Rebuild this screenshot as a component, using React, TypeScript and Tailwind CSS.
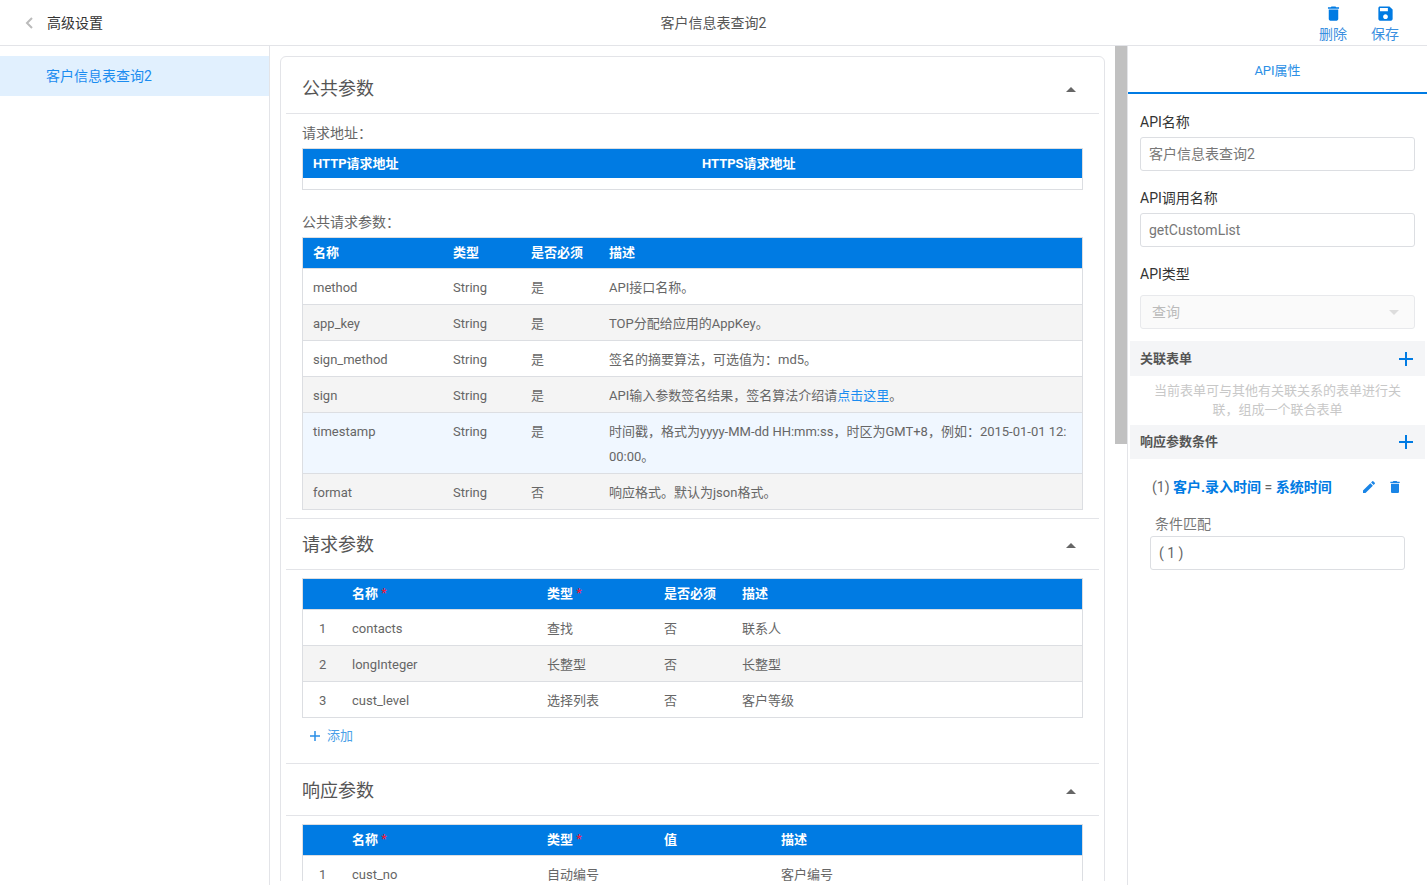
import React from "react";

const FONT = "font-['Roboto','Noto_Sans_CJK_SC',sans-serif]";
const CM = "\uFF0C";
const CL = "\uFF1A";

function Trash({ className }: { className?: string }) {
  return (
    <svg viewBox="0 0 24 24" className={className} fill="currentColor">
      <path d="M6 19c0 1.1.9 2 2 2h8c1.1 0 2-.9 2-2V7H6v12zM19 4h-3.5l-1-1h-5l-1 1H5v2h14V4z" />
    </svg>
  );
}

function Save({ className }: { className?: string }) {
  return (
    <svg viewBox="0 0 24 24" className={className} fill="currentColor">
      <path d="M17 3H5c-1.11 0-2 .9-2 2v14c0 1.1.89 2 2 2h14c1.1 0 2-.9 2-2V7l-4-4zm-5 16c-1.66 0-3-1.34-3-3s1.34-3 3-3 3 1.34 3 3-1.34 3-3 3zm3-10H5V5h10v4z" />
    </svg>
  );
}

function Pencil({ className }: { className?: string }) {
  return (
    <svg viewBox="0 0 24 24" className={className} fill="currentColor">
      <path d="M3 17.25V21h3.75L17.81 9.94l-3.75-3.75L3 17.25zM20.71 7.04a1 1 0 0 0 0-1.41l-2.34-2.34a1 1 0 0 0-1.41 0l-1.83 1.83 3.75 3.75 1.83-1.83z" />
    </svg>
  );
}

function PlusBtn() {
  return (
    <svg viewBox="0 0 14 14" className="w-[14px] h-[14px] text-[#007be3]" stroke="currentColor" strokeWidth="2" fill="none">
      <path d="M7 0v14M0 7h14" />
    </svg>
  );
}

function SectionHead({ title }: { title: string }) {
  return (
    <div className="h-[51px] border-b border-[#e3e4e8] flex items-center justify-between pl-[16px] pr-[23px]">
      <span className="text-[18px] text-[#555]">{title}</span>
      <span className="w-0 h-0 border-x-[5px] border-x-transparent border-b-[5px] border-b-[#666] mt-[3px]" />
    </div>
  );
}

function Cell({ children, className = "" }: { children?: React.ReactNode; className?: string }) {
  return <div className={`pl-[10px] pr-[10px] ${className}`}>{children}</div>;
}

function Head({ cols, labels }: { cols: string; labels: React.ReactNode[] }) {
  return (
    <div className={`grid ${cols} h-[30px] items-center bg-[#007be3] text-white font-bold text-[13px]`}>
      {labels.map((l, i) => (
        <Cell key={i}>{l}</Cell>
      ))}
    </div>
  );
}

function Row({ cols, cells, bg = "", tall = false }: { cols: string; cells: React.ReactNode[]; bg?: string; tall?: boolean }) {
  return (
    <div className={`grid ${cols} border-t border-[#dcdee2] text-[13px] text-[#666] ${tall ? "h-[61px] leading-[25px] pt-[6px]" : "h-[36px] items-center pt-[2px]"} ${bg}`}>
      {cells.map((c, i) => (
        <Cell key={i} className={`break-all ${i === 0 && cols.includes("39px") ? "pl-[16px]" : ""}`}>
          {c}
        </Cell>
      ))}
    </div>
  );
}

const Req = ({ t }: { t: string }) => (
  <span>
    {t} <span className="text-[#ed1c3f] text-[12px] align-top">*</span>
  </span>
);

const C1 = "grid-cols-[140px_78px_78px_1fr]";
const C2 = "grid-cols-[39px_195px_117px_78px_1fr]";
const C3 = "grid-cols-[39px_195px_117px_117px_1fr]";

function Table({ children }: { children: React.ReactNode }) {
  return <div className="border border-[#dcdee2] w-[781px] ml-[16px]">{children}</div>;
}

function Field({ label, value }: { label: string; value: string }) {
  return (
    <div className="px-[12px]">
      <div className="h-[27px] pt-[2px] flex items-center text-[14px] text-[#333]">{label}</div>
      <div className="h-[34px] mt-[2px] border border-[#dcdee2] rounded-[3px] flex items-center pl-[8px] text-[14px] text-[#777]">
        {value}
      </div>
    </div>
  );
}

export default function App() {
  return (
    <div className={`${FONT} h-[885px] w-[1427px] overflow-hidden bg-white flex flex-col`}>
      <header className="h-[46px] shrink-0 border-b border-[#e3e4e8] relative flex items-center justify-between">
        <div className="flex items-center pl-[25px] gap-[13px]">
          <svg viewBox="0 0 9 12" className="w-[9px] h-[12px] text-[#bbb]" fill="none" stroke="currentColor" strokeWidth="2">
            <path d="M7 1L2 6l5 5" />
          </svg>
          <span className="text-[14px] text-[#333] pt-[1px]">高级设置</span>
        </div>
        <div className="absolute left-0 right-0 text-center text-[14px] text-[#555] pt-[1px]">客户信息表查询2</div>
        <div className="flex pr-[28px] gap-[24px] text-[#3a8fe0] text-[14px]">
          <div className="flex flex-col items-center">
            <Trash className="w-[19px] h-[19px] text-[#007be3] mt-[2px]" />
            <span className="leading-[20px] mt-[1px]">删除</span>
          </div>
          <div className="flex flex-col items-center">
            <Save className="w-[19px] h-[19px] text-[#007be3] mt-[2px]" />
            <span className="leading-[20px] mt-[1px]">保存</span>
          </div>
        </div>
      </header>

      <div className="flex flex-1 min-h-0">
        <aside className="w-[270px] shrink-0 border-r border-[#e3e4e8] pt-[10px]">
          <div className="h-[40px] bg-[#e1f0fe] flex items-center pl-[46px] text-[14px] text-[#1a8cf0]">客户信息表查询2</div>
        </aside>

        <main className="w-[845px] shrink-0 h-[835px] overflow-hidden pt-[10px] pl-[10px] pr-[10px]">
          <div className="border border-[#e3e4e8] rounded-t-[6px] px-[5px] pt-[6px] pb-[20px]">
            <SectionHead title="公共参数" />
            <div className="h-[34px] pl-[16px] pt-[9px] leading-[20px] text-[14px] text-[#666]">请求地址{CL}</div>
            <div className="border border-[#dcdee2] w-[781px] ml-[16px]">
              <div className="grid grid-cols-[389px_1fr] h-[29px] items-center bg-[#007be3] text-white font-bold text-[13px]">
                <Cell>HTTP请求地址</Cell>
                <Cell>HTTPS请求地址</Cell>
              </div>
              <div className="h-[11px]" />
            </div>
            <div className="h-[47px] pl-[16px] pt-[22px] leading-[20px] text-[14px] text-[#666]">公共请求参数{CL}</div>
            <Table>
              <Head cols={C1} labels={["名称", "类型", "是否必须", "描述"]} />
              <Row cols={C1} cells={["method", "String", "是", "API接口名称。"]} />
              <Row cols={C1} bg="bg-[#f4f4f4]" cells={["app_key", "String", "是", "TOP分配给应用的AppKey。"]} />
              <Row cols={C1} cells={["sign_method", "String", "是", `签名的摘要算法${CM}可选值为${CL}md5。`]} />
              <Row
                cols={C1}
                bg="bg-[#f4f4f4]"
                cells={["sign", "String", "是", <>API输入参数签名结果{CM}签名算法介绍请<span className="text-[#1a8cf0]">点击这里</span>。</>]}
              />
              <Row
                cols={C1}
                tall
                bg="bg-[#f0f7ff]"
                cells={["timestamp", "String", "是", `时间戳${CM}格式为yyyy-MM-dd HH:mm:ss${CM}时区为GMT+8${CM}例如${CL}2015-01-01 12:00:00。`]}
              />
              <Row cols={C1} bg="bg-[#f4f4f4]" cells={["format", "String", "否", "响应格式。默认为json格式。"]} />
            </Table>

            <div className="border-t border-[#e3e4e8] mt-[8px]">
              <SectionHead title="请求参数" />
            </div>
            <div className="pt-[8px]">
              <Table>
                <Head cols={C2} labels={["", <Req t="名称" />, <Req t="类型" />, "是否必须", "描述"]} />
                <Row cols={C2} cells={["1", "contacts", "查找", "否", "联系人"]} />
                <Row cols={C2} bg="bg-[#f4f4f4]" cells={["2", "longInteger", "长整型", "否", "长整型"]} />
                <Row cols={C2} cells={["3", "cust_level", "选择列表", "否", "客户等级"]} />
              </Table>
            </div>
            <div className="h-[45px] pb-[9px] flex items-center pl-[24px] gap-[7px] text-[13px] text-[#4a9fe8]">
              <svg viewBox="0 0 10 10" className="w-[10px] h-[10px] text-[#2b8fe6]" stroke="currentColor" strokeWidth="1.5" fill="none">
                <path d="M5 0v10M0 5h10" />
              </svg>
              添加
            </div>

            <div className="border-t border-[#e3e4e8] pt-[1px]">
              <SectionHead title="响应参数" />
            </div>
            <div className="pt-[8px]">
              <Table>
                <Head cols={C3} labels={["", <Req t="名称" />, <Req t="类型" />, "值", "描述"]} />
                <Row cols={C3} cells={["1", "cust_no", "自动编号", "", "客户编号"]} />
              </Table>
            </div>
          </div>
        </main>

        <div className="w-[13px] shrink-0 border-r border-[#e3e4e8]">
          <div className="h-[398px] bg-[#c1c1c1]" />
        </div>

        <aside className="flex-1 min-w-0">
          <div className="h-[48px] pt-[3px] border-b-[2px] border-[#007be3] flex items-center justify-center text-[13px] text-[#2b8fe6]">API属性</div>
          <div className="pt-[14px]">
            <Field label="API名称" value="客户信息表查询2" />
            <div className="mt-[13px]">
              <Field label="API调用名称" value="getCustomList" />
            </div>
            <div className="mt-[13px] px-[12px]">
              <div className="h-[27px] pt-[2px] flex items-center text-[14px] text-[#333]">API类型</div>
              <div className="h-[34px] mt-[8px] border border-[#e8e9ec] bg-[#fafafa] rounded-[3px] flex items-center justify-between pl-[11px] pr-[15px] text-[14px] text-[#bbb]">
                查询
                <span className="w-0 h-0 border-x-[5px] border-x-transparent border-t-[5px] border-t-[#ddd]" />
              </div>
            </div>
            <div className="mt-[12px] mx-[2px] h-[35px] bg-[#f4f5f7] flex items-center justify-between pl-[10px] pr-[12px] text-[13px] font-bold text-[#555]">
              关联表单
              <PlusBtn />
            </div>
            <div className="px-[20px] pt-[5px] h-[49px] text-center text-[13px] leading-[19px] text-[#c8c8c8]">
              当前表单可与其他有关联关系的表单进行关联{CM}组成一个联合表单
            </div>
            <div className="mx-[2px] h-[34px] bg-[#f4f5f7] flex items-center justify-between pl-[10px] pr-[12px] text-[13px] font-bold text-[#555]">
              响应参数条件
              <PlusBtn />
            </div>
            <div className="mt-[18px] pl-[24px] pr-[24px] flex items-center justify-between text-[14px] h-[20px]">
              <span className="text-[#666]">
                (1) <span className="text-[#007be3] font-bold">客户.录入时间</span> = <span className="text-[#007be3] font-bold">系统时间</span>
              </span>
              <span className="flex items-center gap-[10px] text-[#1a85e6]">
                <Pencil className="w-[16px] h-[16px]" />
                <Trash className="w-[16px] h-[16px]" />
              </span>
            </div>
            <div className="mt-[17px] pl-[27px] h-[20px] leading-[20px] text-[14px] text-[#777]">条件匹配</div>
            <div className="mt-[2px] mx-[22px] h-[34px] border border-[#dcdee2] rounded-[3px] flex items-center pl-[8px] text-[14px] text-[#666]">
              ( 1 )
            </div>
          </div>
        </aside>
      </div>
    </div>
  );
}
